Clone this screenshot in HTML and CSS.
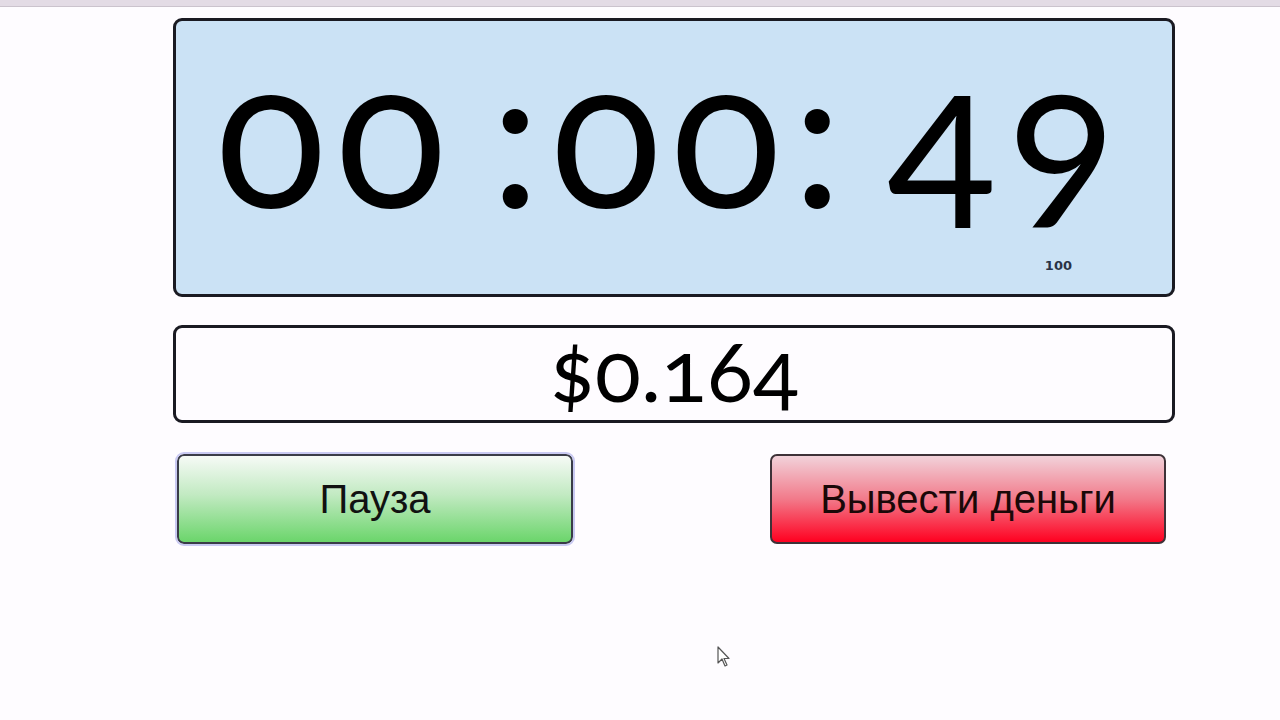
FILE: index.html
```html
<!DOCTYPE html>
<html lang="ru">
<head>
<meta charset="utf-8">
<title>Таймер</title>
<link rel="stylesheet" href="styles.css">
</head>
<body>
<div class="topbar"></div>
<main class="panel">
  <section class="timer">
    <div class="clock">00 :00: 49</div>
    <span class="ticks">100</span>
  </section>
  <section class="earned">$0.164</section>
  <div class="actions">
    <button class="btn btn-pause" type="button">Пауза</button>
    <button class="btn btn-cash" type="button">Вывести деньги</button>
  </div>
</main>
<svg class="pointer" width="14" height="22" viewBox="0 0 14 22" aria-hidden="true">
  <path d="M1 1 L1 17 L5 13 L8 20 L10 19 L7 12.5 L12 12.5 Z" fill="#fff" stroke="#555" stroke-width="1.2" stroke-linejoin="round"/>
</svg>
</body>
</html>
```
FILE: styles.css
```css
html, body {
  margin: 0;
  padding: 0;
  background: #fefcff;
  height: 100%;
  overflow: hidden;
}

.topbar {
  height: 6px;
  background: #e3dbe5;
  border-bottom: 1px solid #cbc3cd;
}

.panel {
  width: 1002px;
  margin-left: 173px;
  padding-top: 11px;
  display: flex;
  flex-direction: column;
}

.timer {
  position: relative;
  box-sizing: border-box;
  height: 279px;
  padding: 10px 0 0 41px;
  background: #cbe2f5;
  border: 3px solid #1a1a22;
  border-radius: 9px;
  display: flex;
  align-items: flex-start;
  justify-content: flex-start;
}

.clock {
  font-family: Lato, "Noto Sans", sans-serif;
  font-feature-settings: "onum" 1;
  font-variant-numeric: oldstyle-nums;
  font-size: 200px;
  line-height: 1;
  letter-spacing: 12px;
  word-spacing: -30px;
  color: #000;
  white-space: pre;
}

.ticks {
  position: absolute;
  right: 100px;
  bottom: 21px;
  font-family: "DejaVu Sans", sans-serif;
  font-weight: bold;
  font-size: 13px;
  color: #2a3245;
}

.earned {
  box-sizing: border-box;
  margin-top: 28px;
  height: 98px;
  padding-bottom: 10px;
  background: #fefcff;
  border: 3px solid #1a1a22;
  border-radius: 9px;
  display: flex;
  align-items: center;
  justify-content: center;
  font-family: Lato, "Noto Sans", sans-serif;
  font-feature-settings: "onum" 1;
  font-variant-numeric: oldstyle-nums;
  font-size: 85px;
  line-height: 1;
  color: #000;
}

.actions {
  margin-top: 31px;
  padding: 0 9px 0 4px;
  display: flex;
  justify-content: space-between;
}

.btn {
  box-sizing: border-box;
  width: 396px;
  height: 90px;
  border-radius: 7px;
  font-family: "Liberation Sans", Arial, sans-serif;
  font-size: 40px;
  color: #111;
  cursor: pointer;
  padding: 0;
}

.btn-pause {
  border: 2px solid #3a3c48;
  background: linear-gradient(to bottom, #f6faf6 0%, #c2eac2 45%, #6bd56b 100%);
  outline: 2px solid #c9c9f2;
  outline-offset: 0;
}

.btn-cash {
  border: 2px solid #3e3238;
  background: linear-gradient(to bottom, #f2d2da 0%, #f27a8a 50%, #ff0020 100%);
  color: #1a0808;
}

.pointer {
  position: absolute;
  left: 717px;
  top: 646px;
}
```
